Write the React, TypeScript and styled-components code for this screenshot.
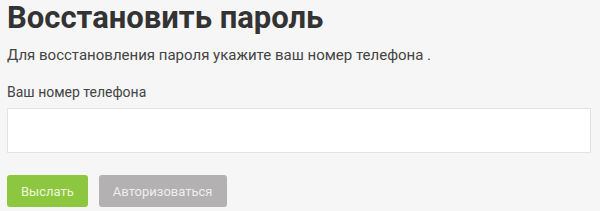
import { createGlobalStyle } from "styled-components";
import styled from "styled-components";

const GlobalStyle = createGlobalStyle`
  html, body {
    margin: 0;
    padding: 0;
    background: #f6f6f6;
    font-family: Roboto, "Liberation Sans", sans-serif;
    color: #333;
  }
`;

export default function App() {
  return (
    <>
      <GlobalStyle />
      <StyledRestore>
        <Title>Восстановить пароль</Title>
        <Hint>Для восстановления пароля укажите ваш номер телефона .</Hint>
        <Label htmlFor="phone">Ваш номер телефона</Label>
        <PhoneInput id="phone" type="tel" />
        <Actions>
          <ActionButton $variant="primary">Выслать</ActionButton>
          <ActionButton $variant="muted">Авторизоваться</ActionButton>
        </Actions>
      </StyledRestore>
    </>
  );
}

const StyledRestore = styled.div`
  width: 584px;
  padding: 0 9px 0 7px;
  display: flex;
  flex-direction: column;
`;

const Title = styled.h1`
  margin: 0;
  font-size: 31px;
  line-height: 36px;
  font-weight: 700;
  color: #333;
`;

const Hint = styled.p`
  margin: 9px 0 0;
  font-size: 15px;
  line-height: 20px;
  color: #444;
`;

const Label = styled.label`
  margin-top: 17px;
  font-size: 14px;
  line-height: 20px;
  color: #444;
`;

const PhoneInput = styled.input`
  box-sizing: border-box;
  margin-top: 6px;
  width: 100%;
  height: 45px;
  border: 1px solid #e3e3e3;
  background: #fff;
  outline: none;
  font-size: 14px;
`;

const Actions = styled.div`
  display: flex;
  gap: 11px;
  margin-top: 22px;
`;

const ActionButton = styled.button<{ $variant: "primary" | "muted" }>`
  height: 32px;
  padding: 0 14px;
  border: none;
  border-radius: 3px;
  font-family: Roboto, "Liberation Sans", sans-serif;
  font-size: 13px;
  cursor: pointer;
  background: ${(p) => (p.$variant === "primary" ? "#8dc63f" : "#b3b1b1")};
  color: ${(p) => (p.$variant === "primary" ? "#eef7df" : "#eeeeee")};
`;
